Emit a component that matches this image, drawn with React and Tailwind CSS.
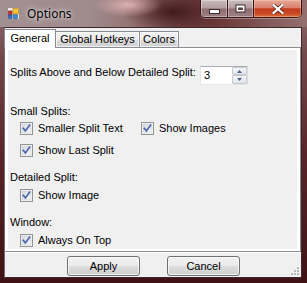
import React from "react";

function Check() {
  return (
    <svg width="13" height="13" viewBox="0 0 13 13" className="shrink-0 block">
      <defs>
        <linearGradient id="cbg" x1="0" y1="0" x2="1" y2="1">
          <stop offset="0" stopColor="#d6d9de" />
          <stop offset="1" stopColor="#f8f8f8" />
        </linearGradient>
      </defs>
      <rect x="0.5" y="0.5" width="12" height="12" fill="#fdfdfd" stroke="#939494" />
      <rect x="2" y="2" width="9" height="9" fill="url(#cbg)" stroke="#c5c8ce" strokeWidth="0.6" />
      <path d="M3.3 6.4 L5.4 8.9 L9.6 3.2" stroke="#4a66b0" strokeWidth="1.7" fill="none" strokeLinecap="square" />
    </svg>
  );
}

function CheckRow({ label }) {
  return (
    <div className="flex items-center h-[13px]">
      <Check />
      <span className="ml-[5px] leading-[13px] whitespace-nowrap">{label}</span>
    </div>
  );
}

function Numeric() {
  return (
    <div className="w-[48px] h-[19px] border border-[#abadb3] border-l-[#e2e3ea] border-r-[#dbdfe6] border-b-[#e3e9ef] bg-white flex">
      <span className="flex-1 pl-[3px] leading-[17px]">3</span>
      <div className="w-[15px] flex flex-col">
        <div className="h-[8px] border border-[#c6c9cf] rounded-[1px] bg-[linear-gradient(180deg,#f4f5f7,#e1e4e9)] flex items-center justify-center">
          <svg width="5" height="3" viewBox="0 0 5 3"><path d="M0 3 L2.5 0 L5 3 Z" fill="#4d6185" /></svg>
        </div>
        <div className="h-[9px] border border-[#c6c9cf] rounded-[1px] bg-[linear-gradient(180deg,#f4f5f7,#e1e4e9)] flex items-center justify-center">
          <svg width="5" height="3" viewBox="0 0 5 3"><path d="M0 0 L2.5 3 L5 0 Z" fill="#4d6185" /></svg>
        </div>
      </div>
    </div>
  );
}

function Button({ children }) {
  return (
    <div className="w-[73px] h-[20px] rounded-[3px] border border-[#707070] bg-[linear-gradient(180deg,#f2f2f2_0%,#ebebeb_50%,#dddddd_51%,#cfcfcf_100%)] shadow-[inset_0_0_0_1px_rgba(255,255,255,0.7)] flex items-center justify-center leading-[13px]">
      {children}
    </div>
  );
}

export default function App() {
  return (
    <div className="relative w-[307px] h-[283px] overflow-hidden flex flex-col text-[11px] text-black font-['Liberation_Sans',Arial,sans-serif] bg-[linear-gradient(180deg,#8e7274_0%,#74474a_20%,#5a2528_55%,#3e1214_100%)]">
      {/* title bar */}
      <div className="h-[27px] shrink-0 flex items-start bg-[radial-gradient(ellipse_34px_12px_at_128px_5px,rgba(232,186,186,0.85),transparent),radial-gradient(ellipse_50px_22px_at_172px_12px,rgba(45,10,10,0.75),transparent),linear-gradient(90deg,#a39092_0%,#9f8a8c_30%,#93706f_45%,#7a4a4b_58%,#6a3537_70%,#845a5c_88%,#94706f_100%)]">
        <svg width="13" height="13" viewBox="0 0 13 13" className="ml-[7px] mt-[7px] shrink-0">
          <rect x="0.5" y="0.5" width="12" height="12" fill="#e9e6e6" stroke="#9a9090" />
          <rect x="1.5" y="4" width="3.5" height="3.5" fill="#d8322a" stroke="#7a1a14" strokeWidth="0.6" />
          <rect x="1.5" y="8" width="3.5" height="3.5" fill="#3a6fd0" stroke="#1d3c7a" strokeWidth="0.6" />
          <rect x="6" y="1.5" width="5.5" height="5.5" fill="#f6c431" stroke="#b07a10" strokeWidth="0.6" />
          <rect x="6.5" y="7.8" width="4" height="3.7" fill="#3a8fd8" stroke="#1d4c7a" strokeWidth="0.6" />
        </svg>
        <span className="ml-[7px] mt-[7px] text-[12px] leading-[14px] font-['Noto_Sans',sans-serif] [text-shadow:0_0_6px_rgba(255,255,255,0.75),0_0_3px_rgba(255,255,255,0.6)]">
          Options
        </span>
        <div className="ml-auto mr-[5px] flex h-[18px] rounded-b-[5px] border border-t-0 border-[#3a1717] overflow-hidden shadow-[0_1px_0_rgba(255,255,255,0.3)]">
          <div className="w-[27px] border-r border-[#3a1717] bg-[linear-gradient(180deg,#c9bbbc_0%,#b39c9e_48%,#8d6d6f_52%,#9e8183_100%)] shadow-[inset_0_0_0_1px_rgba(255,255,255,0.35)] flex items-center justify-center">
            <svg width="11" height="5" viewBox="0 0 11 5" className="mt-[6px]">
              <rect x="0.5" y="0.5" width="10" height="4" fill="#fff" stroke="#3b2a2b" />
            </svg>
          </div>
          <div className="w-[26px] border-r border-[#3a1717] bg-[linear-gradient(180deg,#c9bbbc_0%,#b39c9e_48%,#8d6d6f_52%,#9e8183_100%)] shadow-[inset_0_0_0_1px_rgba(255,255,255,0.35)] flex items-center justify-center">
            <svg width="11" height="9" viewBox="0 0 11 9">
              <rect x="0.5" y="0.5" width="10" height="8" fill="#3b2a2b" />
              <rect x="1.5" y="1.5" width="8" height="6" fill="#fff" />
              <rect x="3" y="3.5" width="5" height="2.5" fill="#5a4243" />
            </svg>
          </div>
          <div className="w-[47px] bg-[linear-gradient(180deg,#e7a897_0%,#d9826d_45%,#c1391d_52%,#c84a26_80%,#e0703a_100%)] shadow-[inset_0_0_0_1px_rgba(255,220,200,0.35)] flex items-center justify-center">
            <svg width="12" height="10" viewBox="0 0 12 10">
              <path d="M1.5 1 L10.5 9 M10.5 1 L1.5 9" stroke="#4a1a10" strokeWidth="3.6" strokeLinecap="square" />
              <path d="M1.5 1 L10.5 9 M10.5 1 L1.5 9" stroke="#fff" strokeWidth="2.2" strokeLinecap="square" />
            </svg>
          </div>
        </div>
      </div>

      {/* client area */}
      <div className="relative ml-[4px] w-[298px] h-[251px] shrink-0 border border-[#3c2a2a] border-l-[#6f6a6c] bg-[#f0f0f0] flex flex-col">
        {/* tab strip */}
        <div className="h-[19px] shrink-0 flex items-start relative z-10">
          <div className="mt-px h-[19px] w-[52px] -ml-px bg-white border border-b-0 border-[#898c95] flex items-start justify-center">
            <span className="leading-[13px] mt-[2px]">General</span>
          </div>
          <div className="mt-[3px] h-[16px] w-[84px] bg-[linear-gradient(180deg,#f2f2f2_0%,#ebebeb_50%,#dddddd_51%,#cfcfcf_100%)] border border-b-0 border-l-0 border-[#898c95] shadow-[inset_0_0_0_1px_rgba(255,255,255,0.7)] flex items-center justify-center">
            <span className="leading-[13px]">Global Hotkeys</span>
          </div>
          <div className="mt-[3px] h-[16px] w-[39px] bg-[linear-gradient(180deg,#f2f2f2_0%,#ebebeb_50%,#dddddd_51%,#cfcfcf_100%)] border border-b-0 border-l-0 border-[#898c95] shadow-[inset_0_0_0_1px_rgba(255,255,255,0.7)] flex items-center justify-center">
            <span className="leading-[13px]">Colors</span>
          </div>
        </div>

        {/* tab panel */}
        <div className="h-[205px] shrink-0 border border-l-0 border-[#898c95] bg-white pl-[3px] pt-[2px] pr-[3px] pb-[2px] flex flex-col">
          <div className="flex-1 bg-[#f0f0f0] pl-[2px] flex flex-col">
            <div className="mt-[16px] h-[19px] flex items-start">
              <span className="w-[190px] leading-[13px] whitespace-nowrap">Splits Above and Below Detailed Split:</span>
              <Numeric />
            </div>

            <div className="mt-[20px] h-[13px] leading-[13px]">Small Splits:</div>
            <div className="mt-[4px] ml-[10px] flex">
              <div className="w-[121px]"><CheckRow label="Smaller Split Text" /></div>
              <CheckRow label="Show Images" />
            </div>
            <div className="mt-[9px] ml-[10px]"><CheckRow label="Show Last Split" /></div>

            <div className="mt-[14px] h-[13px] leading-[13px]">Detailed Split:</div>
            <div className="mt-[5px] ml-[10px]"><CheckRow label="Show Image" /></div>

            <div className="mt-[14px] h-[13px] leading-[13px]">Window:</div>
            <div className="mt-[5px] ml-[10px]"><CheckRow label="Always On Top" /></div>
          </div>
        </div>

        {/* bottom buttons */}
        <div className="flex-1 border-t border-white flex items-start">
          <div className="mt-[3px] ml-[62px]"><Button>Apply</Button></div>
          <div className="mt-[3px] ml-[27px]"><Button>Cancel</Button></div>
        </div>

        <svg width="8" height="8" viewBox="0 0 8 8" className="absolute right-[2px] bottom-[2px]">
          <rect x="6" y="0" width="2" height="2" fill="#b9b9b9" />
          <rect x="3" y="3" width="2" height="2" fill="#b9b9b9" />
          <rect x="6" y="3" width="2" height="2" fill="#b9b9b9" />
          <rect x="0" y="6" width="2" height="2" fill="#b9b9b9" />
          <rect x="3" y="6" width="2" height="2" fill="#b9b9b9" />
          <rect x="6" y="6" width="2" height="2" fill="#b9b9b9" />
        </svg>
      </div>
    </div>
  );
}
